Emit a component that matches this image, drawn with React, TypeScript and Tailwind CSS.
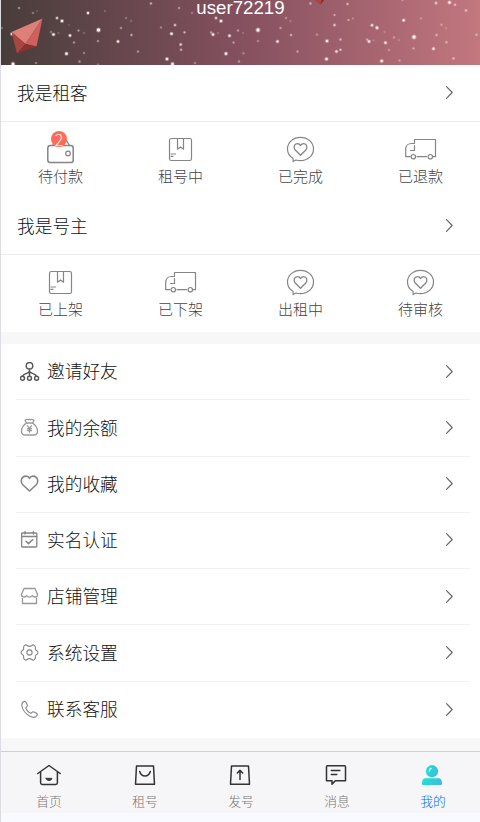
import React from 'react';

const iconProps = {
  fill: 'none',
  stroke: 'currentColor',
  strokeLinecap: 'round' as const,
  strokeLinejoin: 'round' as const,
};

// [x, y, radius, opacity]
const stars = [
  [19, 8, 1.2, 0.5], [33, 13, 1.2, 0.4], [37, 11, 0.8, 0.3], [57, 18, 1.5, 0.8], [62, 21, 1.8, 0.95],
  [88, 13, 1.6, 0.9], [105, 11, 1, 0.3], [126, 18, 1.1, 0.4], [131, 21, 1, 0.3], [151, 3.5, 1.3, 0.6],
  [179, 8, 1.2, 0.5], [192, 13, 1.1, 0.4], [216, 18, 1.5, 0.8], [221, 21, 1.8, 0.95], [2, 28, 1, 0.4],
  [12, 34, 1.8, 0.9], [51, 32, 1.1, 0.5], [53.5, 34.5, 1.7, 0.95], [58.5, 33, 1, 0.3], [70, 35.5, 1.6, 0.9],
  [78.5, 30.5, 1.2, 0.5], [84, 33, 1, 0.3], [69, 25, 0.9, 0.2], [98.5, 30, 2.2, 1], [121, 28, 1.2, 0.5],
  [131.5, 35, 1.3, 0.6], [118, 41.5, 1.6, 0.9], [98, 41, 1.2, 0.5], [74, 42.5, 1.2, 0.5], [66.5, 53.7, 1.8, 0.95],
  [84, 53, 1.2, 0.4], [79.5, 61.5, 1.3, 0.5], [13, 64, 2, 1], [36, 63, 1.2, 0.4], [98, 64.5, 1, 0.4],
  [138, 51.5, 1.2, 0.5], [161, 27.5, 1.2, 0.4], [175, 25, 1.5, 0.7], [171.5, 33.8, 1.7, 0.95], [184.5, 32.3, 1.2, 0.7],
  [180.7, 44.5, 1.5, 0.8], [181, 49.7, 1.3, 0.6], [167, 59, 1.8, 0.95], [172.5, 64, 1.9, 0.9], [195, 63, 1.2, 0.4],
  [211, 32.3, 1.1, 0.6], [213, 34.5, 1.7, 0.95], [218, 33, 1, 0.3], [229.5, 35.7, 1.6, 0.9], [238, 30.5, 1.2, 0.5],
  [233.5, 42.5, 1.2, 0.5], [226, 53.7, 1.8, 0.95], [239, 61.5, 1.2, 0.5], [243.5, 53.3, 1.2, 0.4],
  [258, 30, 2.2, 1], [243, 33, 0.9, 0.3], [286, 18, 1.2, 0.4], [290.5, 21, 1.1, 0.3], [280.5, 28, 1.2, 0.5],
  [291, 35, 1.3, 0.6], [277.5, 41.5, 1.6, 0.9], [258, 41, 1.2, 0.4], [297.5, 51.5, 1.2, 0.5], [310.5, 3.5, 1.3, 0.6],
  [347.5, 4, 1.4, 0.6], [334.5, 15, 1.2, 0.5], [348.5, 20, 1.2, 0.5], [353, 18.5, 1, 0.4], [334.5, 25, 1.5, 0.7],
  [317, 34.7, 1.2, 0.4], [327, 41, 1.8, 0.95], [340.5, 39.5, 1.3, 0.6], [336.5, 51.5, 1.6, 0.8], [340.5, 49.7, 1.3, 0.7],
  [326.5, 59, 1.8, 0.95], [372, 25.3, 1.6, 0.8], [377, 27.8, 1.8, 0.95], [384.5, 32, 1, 0.3], [367, 39.5, 1.2, 0.5],
  [369, 41.5, 1.7, 0.9], [373.7, 40.3, 1, 0.3], [385.5, 42.8, 1.6, 0.9], [394, 37.5, 1.2, 0.4], [399, 40, 1, 0.3],
  [389, 50, 1.2, 0.4], [381.7, 61, 1.8, 0.95], [399.5, 60.5, 1.2, 0.4], [403.7, 20.3, 1.6, 0.9], [421, 18.3, 1.1, 0.4],
  [414, 37, 2.2, 1], [413.5, 48.3, 1.2, 0.5], [433.5, 48.7, 1.6, 0.9], [436.5, 35, 1.3, 0.5], [446.5, 42.3, 1.3, 0.5],
  [441.5, 24.7, 1.2, 0.4], [446, 28, 1.1, 0.3], [436, 3, 1.5, 0.7], [449.5, 2.5, 1.8, 0.95], [455, 4.8, 1.3, 0.6],
  [466, 10.5, 1.4, 0.6], [476.5, 34.7, 1.3, 0.5], [453.5, 58.5, 1.3, 0.6], [402.5, 0, 1.2, 0.4],
];

const Wallet = () => (
  <>
    <rect x="2.8" y="11.6" width="25.4" height="17" rx="2.6" strokeWidth="1.5" />
    <circle cx="23" cy="19.4" r="2.3" />
    <path d="M6.500 11.500L20.500 6.500q1-.3 1.400.6L24.500 11.500" />
  </>
);

const Parcel = () => (
  <>
    <rect x="4.500" y="4.500" width="22" height="22" rx="1.800" />
    <path d="M12.500 4.500V15.200l3-2.200 3 2.200V4.500M6 20h4.500M6 22.300h2" />
  </>
);

const LikeBubble = () => (
  <>
    <path d="M8 24.300C4.500 22.300 2.500 19 2.500 15C2.500 8.200 8.500 3.400 15.500 3.400S28.500 8.200 28.500 15S22.500 26.600 15.500 26.600C14 26.600 12 26.300 11 26L8.200 27.600Z" />
    <path d="M15.500 21.300L10.200 16C7.900 13.200 9.500 9.600 12.200 9.600C13.700 9.600 15 10.400 15.500 11.600C16 10.400 17.300 9.600 18.800 9.600C21.500 9.600 23.100 13.200 20.800 16Z" strokeWidth="1.300" />
  </>
);

const Truck = () => (
  <>
    <path d="M9.500 8.500V5.500H30.500V22.700H28M21.500 22.700H12M5 22.700H.7V15.500C.7 11.500 3.500 9.500 6.500 9.500H9.500M9.500 11.500V16.500H5.500" />
    <circle cx="8.300" cy="22.700" r="2.200" />
    <circle cx="25.300" cy="22.700" r="2.200" />
  </>
);

const Chevron = () => (
  <svg className="h-4 w-4" viewBox="0 0 16 16" {...iconProps} strokeWidth="1.2">
    <path d="M5.500 1.700L11.200 7.500L5.500 13.300" />
  </svg>
);

interface GridItem {
  label: string;
  icon: React.ReactNode;
  badge?: number;
}

const tenantItems: GridItem[] = [
  { label: '待付款', icon: <Wallet />, badge: 2 },
  { label: '租号中', icon: <Parcel /> },
  { label: '已完成', icon: <LikeBubble /> },
  { label: '已退款', icon: <Truck /> },
];

const ownerItems: GridItem[] = [
  { label: '已上架', icon: <Parcel /> },
  { label: '已下架', icon: <Truck /> },
  { label: '出租中', icon: <LikeBubble /> },
  { label: '待审核', icon: <LikeBubble /> },
];

const menuItems = [
  {
    label: '邀请好友',
    color: 'text-[#555]',
    icon: (
      <g strokeWidth="1.4">
        <circle cx="9.500" cy="3.800" r="3.300" />
        <circle cx="2.500" cy="16.300" r="2" />
        <circle cx="9.500" cy="16.300" r="2" />
        <circle cx="16.600" cy="16.300" r="2" />
        <path d="M9.500 7V14.300M2.700 14.200C3.500 11.300 7.500 12 9.500 9.500C11.500 12 15.600 11.300 16.400 14.200" />
      </g>
    ),
  },
  {
    label: '我的余额',
    color: 'text-[#999]',
    icon: (
      <g strokeWidth="1.3">
        <path d="M6.500 5L5 2.500Q7 .8 8.500 1.800Q9.500 .8 10.500 1.800Q12 .8 14 2.500L12.500 5Z" />
        <path d="M6.500 5C3.500 7 1.500 10 1.500 13.200Q1.500 17 5.500 17H13.500Q17.500 17 17.500 13.200C17.500 10 15.500 7 12.500 5" />
        <path d="M7.500 7.800L9.500 10.200L11.500 7.800M7.400 10.600H11.600M7.400 12.500H11.600M9.500 10.200V14" />
      </g>
    ),
  },
  {
    label: '我的收藏',
    color: 'text-[#858585]',
    icon: (
      <path strokeWidth="1.600" d="M9.500 17L3 11C.3 8.200 1 4.500 3.200 3C5.500 1.400 8.400 2.300 9.500 4.300C10.600 2.300 13.500 1.400 15.800 3C18 4.500 18.700 8.200 16 11Z" />
    ),
  },
  {
    label: '实名认证',
    color: 'text-[#858585]',
    icon: (
      <g strokeWidth="1.3">
        <rect x="1.600" y="3" width="15.200" height="14" rx=".8" />
        <path d="M1.600 6.500H16.800M5 1.500V4M13.400 1.500V4" />
        <path d="M6 11.300L8.500 13.600L12.800 9.500" strokeWidth="1.500" />
      </g>
    ),
  },
  {
    label: '店铺管理',
    color: 'text-[#999]',
    icon: (
      <path strokeWidth="1.300" d="M4 1.500H15L17.600 7.500Q17.600 10 15 10Q13 10 12.300 8.500Q11.300 10.200 9.500 10.200Q7.700 10.200 6.700 8.500Q6 10 4 10Q1.400 10 1.400 7.500ZM2.500 11.500V16.500H16.500V11.500" />
    ),
  },
  {
    label: '系统设置',
    color: 'text-[#858585]',
    icon: (
      <g strokeWidth="1.1">
        <path d="M5.200 2.100Q6.300 1.600 7.200 2.500Q9.500 4.200 11.800 2.500Q12.700 1.600 13.800 2.100L15 3Q15.700 3.800 15.300 5Q15 7 17 7.700Q17.900 8.300 17.900 9.500T17 11.300Q15 12 15.300 14Q15.700 15.200 15 16L13.800 16.900Q12.700 17.400 11.800 16.500Q9.500 14.800 7.200 16.500Q6.300 17.400 5.200 16.900L4 16Q3.300 15.200 3.700 14Q4 12 2 11.300Q1.100 10.700 1.100 9.500T2 7.700Q4 7 3.700 5Q3.300 3.800 4 3Z" />
        <circle cx="9.500" cy="9.500" r="2.600" />
      </g>
    ),
  },
  {
    label: '联系客服',
    color: 'text-[#858585]',
    icon: (
      <path strokeWidth="1.100" d="M4.500 1.300Q5.500 1.200 6.200 2.500L7.300 5Q7.700 6.200 6.500 7Q5.500 7.700 6 8.700C7 10.700 8.200 12 10.200 13Q11.200 13.400 12 12.400Q12.800 11.400 14 12L16.500 13.300Q17.700 14 17 15.200C15.500 18 12.500 17.800 10 16.300C6 14 2.800 10.500 2 6.500C1.500 4 2.500 2 4.500 1.300Z" />
    ),
  },
];

const tabs = [
  {
    label: '首页',
    icon: (
      <>
        <path d="M.8 10.500L12 2.500L23.200 10.500M3.600 9V19.800Q3.600 21.500 5.300 21.500H18.700Q20.400 21.500 20.400 19.800V9" />
        <path d="M9 15.300H15Q14.500 17.600 12 17.600T9 15.300Z" fill="currentColor" strokeWidth=".8" />
      </>
    ),
  },
  {
    label: '租号',
    icon: <path d="M3.500 3H20.500L21.500 21.200H2.500ZM6.700 8.500Q8 13 12 13T17.300 8.500" />,
  },
  {
    label: '发号',
    icon: <path d="M2.500 3H19.500L20.500 21.200H1.500ZM11 16.500V7.500M8.300 10L11 7.200L13.700 10" />,
  },
  {
    label: '消息',
    icon: <path d="M2.300 2.800H19.500Q20.500 2.800 20.500 3.800V17.700H10.300L7 21.300V17.700H1.500V3.800Q1.500 2.800 2.300 2.800ZM6.300 7.500H14.800M6.300 11.600H11.800" />,
  },
  {
    label: '我的',
    active: true,
    icon: (
      <g stroke="none">
        <defs>
          <linearGradient id="person" x1="0" y1="0" x2="1" y2=".3">
            <stop offset="0" stopColor="#17e8d5" />
            <stop offset="1" stopColor="#43bbda" />
          </linearGradient>
        </defs>
        <circle cx="11" cy="8.200" r="6.100" fill="url(#person)" />
        <path d="M4 15.200H18Q21 16 21 20V21Q21 22 20 22H2Q1 22 1 21V20Q1 16 4 15.200Z" fill="url(#person)" />
        <path d="M8.300 8.200Q8.300 6 10 5.300" fill="none" stroke="#e5fffc" strokeWidth="1.300" />
      </g>
    ),
  },
];

const Section = ({ title, items }: { title: string; items: GridItem[] }) => (
  <section className="bg-white">
    <div className="flex h-[57px] items-center justify-between border-b border-[#ebebeb] pl-4 pr-6 text-[#666]">
      <h2 className="pt-0.5 text-[17.7px] font-light text-[#111]">{title}</h2>
      <Chevron />
    </div>
    <div className="grid h-[76px] grid-cols-4 pt-3">
      {items.map((item) => (
        <div key={item.label} className="flex flex-col items-center text-[#858585]">
          <div className="relative h-8 w-8">
            <svg className="h-8 w-8" viewBox="0 0 32 32" {...iconProps} strokeWidth="1.2">
              {item.icon}
            </svg>
            {item.badge && (
              <span className="absolute -top-[3px] left-[6px] flex h-4 w-4 items-center justify-center rounded-full bg-[#ff6b57] font-['Noto_Sans_CJK_SC',sans-serif] text-[16px] font-light leading-none text-white">
                {item.badge}
              </span>
            )}
          </div>
          <span className="mr-px text-[15px] font-light leading-[21px] text-[#444]">{item.label}</span>
        </div>
      ))}
    </div>
  </section>
);

export default function App() {
  return (
    <div className="h-[822px] w-[480px] overflow-hidden border-l border-[#dcdce2] bg-[#f7f7f7] font-['Liberation_Sans','Noto_Sans_CJK_SC',sans-serif]">
      <div className="w-[480px]">
        <header className="relative h-[65px] overflow-hidden bg-linear-to-r from-[#483d3b] via-[#85505f] to-[#c3777f]">
          <svg className="absolute -left-px top-0 h-[65px] w-[481px]" viewBox="0 0 481 65">
            {stars.map(([x, y, r, opacity], i) => (
              <g key={i} fill="#fff2f0" opacity={opacity}>
                <circle cx={x} cy={y} r={r + 0.4} opacity=".3" />
                <circle cx={x} cy={y} r={r * 0.75} />
              </g>
            ))}
            <path d="M42.500 18.500L11.500 32L25.500 44Z" fill="#dc8078" />
            <path d="M42.500 18.500L25.500 44L36.500 46.500Z" fill="#cf605d" />
            <path d="M11.500 32L25.500 44L17 53.500Z" fill="#a94542" />
            <path d="M25.500 44L36.500 46.500L17 53.500Z" fill="#8d322f" />
            <path d="M314.500 0H324L320.500 4.800Z" fill="#ad4641" />
            <path d="M321.500 0H324L320.500 4.800Z" fill="#812d2c" />
          </svg>
          <p className="relative pr-px text-center text-[18.7px] leading-[15px] text-white">user72219</p>
        </header>

        <Section title="我是租客" items={tenantItems} />
        <Section title="我是号主" items={ownerItems} />
        <div className="h-px bg-white" />

        <ul className="mt-3 bg-white pl-[15px] pr-[11px]">
          {menuItems.map((item) => (
            <li
              key={item.label}
              className="flex h-[56.28px] items-center border-b border-[#f1f1f1] pl-1 pr-[13px] text-[#666] last:border-b-0"
            >
              <svg className={`mr-[7px] h-5 w-5 ${item.color}`} viewBox="0 0 20 20" {...iconProps}>
                {item.icon}
              </svg>
              <span className="flex-1 pt-0.5 text-[17.7px] font-light text-[#111]">{item.label}</span>
              <Chevron />
            </li>
          ))}
        </ul>

        <nav className="mt-[13px] grid h-[62px] grid-cols-5 border-t border-[#cfcfd4] bg-[#f6f6f9]">
          {tabs.map((tab) => (
            <div key={tab.label} className="flex flex-col items-center pt-[11px] text-[#333]">
              <svg className="h-6 w-6" viewBox="0 0 24 24" {...iconProps} strokeWidth="1.5">
                {tab.icon}
              </svg>
              <span className={`mt-1.5 text-[12.8px] font-light leading-[18px] ${tab.active ? 'text-[#006aff]' : 'text-[#777]'}`}>
                {tab.label}
              </span>
            </div>
          ))}
        </nav>
        <div className="h-[9px] bg-[#f9faff]" />
      </div>
    </div>
  );
}
